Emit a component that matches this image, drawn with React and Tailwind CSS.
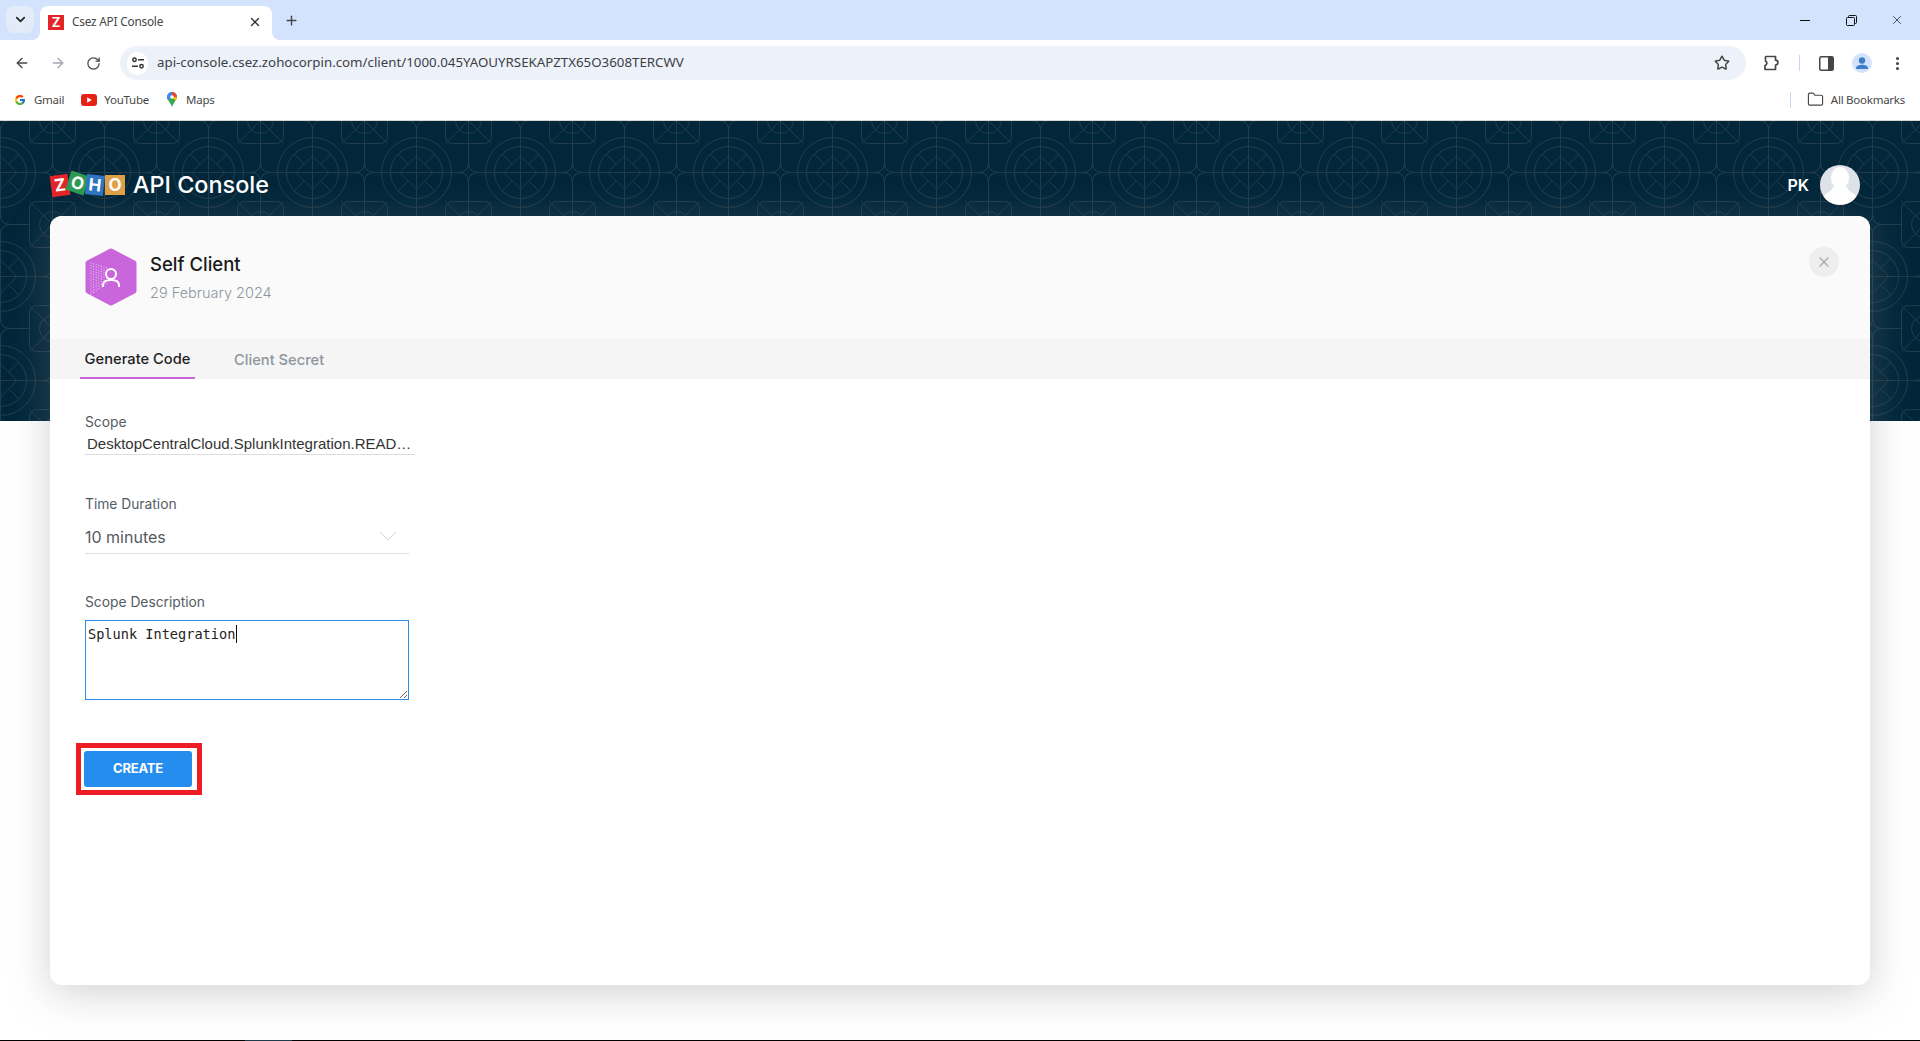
import { ArrowLeft, ArrowRight, ChevronDown, Folder, MoreVertical, Plus, RotateCw, Star, X } from "lucide-react";
import { FcGoogle } from "react-icons/fc";

const uiFont = "font-['Inter',sans-serif]";
const chromeFont = "font-['Noto_Sans',sans-serif]";

function BannerPattern() {
  const squares = [[-52, -52], [52, -52], [-52, 52], [52, 52]];
  const stars = [[-52, 0], [52, 0], [0, -52], [0, 52]];
  return (
    <svg className="absolute inset-0 h-full w-full" xmlns="http://www.w3.org/2000/svg">
      <defs>
        <pattern id="tile" x="52" y="-1" width="104" height="104" patternUnits="userSpaceOnUse">
          <g transform="translate(52.5 52.5)" fill="none" stroke="#223c4b" strokeWidth="1">
            <path d="M-52 -52V52M52 -52V52M0 -52V52M-52 0H52M-52 -52H-29M29 -52H52M-29 52H29M-52 52H-29M29 52H52M-29 -52H29" />
            <circle r="35" />
            <circle r="26" />
            <path d="M-16.5 0L0 -16.5L16.5 0L0 16.5Z" />
            <path d="M-18.4 -18.4L-8.2 -8.2M18.4 -18.4L8.2 -8.2M-18.4 18.4L-8.2 8.2M18.4 18.4L8.2 8.2" />
            {squares.map(([x, y]) => (
              <g key={`${x}${y}`} transform={`translate(${x} ${y})`}>
                <rect x="-23" y="-23" width="46" height="46" rx="7" fill="#02273b" />
                <circle r="13" />
                <path d="M-23 -23L23 23M23 -23L-23 23M0 -23V23" />
              </g>
            ))}
            {stars.map(([x, y]) => (
              <path
                key={`s${x}${y}`}
                transform={`translate(${x} ${y})`}
                d="M-10 0Q0 0 0 -10Q0 0 10 0Q0 0 0 10Q0 0 -10 0Z"
                fill="#02273b"
              />
            ))}
          </g>
        </pattern>
      </defs>
      <rect width="100%" height="100%" fill="url(#tile)" />
    </svg>
  );
}

function ZohoLogo() {
  return (
    <div className={`flex items-center ${uiFont} text-[17px] font-bold leading-none text-white`}>
      <span className="flex h-[21px] w-[18px] -rotate-[8deg] items-center justify-center bg-[#e42527]">Z</span>
      <span className="flex h-[20px] w-[19px] -ml-[1px] -mt-[4px] rotate-[18deg] items-center justify-center bg-[#2d9a53]">O</span>
      <span className="flex h-[20px] w-[18px] -ml-[1px] -mt-[1px] rotate-[6deg] items-center justify-center bg-[#2f75c2]">H</span>
      <span className="flex h-[20px] w-[20px] ml-[1px] items-center justify-center bg-[#df9f47]">O</span>
    </div>
  );
}

function HexBadge() {
  const dots = [];
  for (let c = 0; c < 7; c++) {
    for (let r = 0; r < 13 - c; r++) {
      dots.push([6 + c * 2.6, 15 + c * 0.8 + r * 2.6]);
    }
  }
  return (
    <svg width="52" height="58" viewBox="0 0 52 58">
      <path d="M26 3L49 15V43L26 55L3 43V15Z" fill="#c966dc" stroke="#c966dc" strokeWidth="5" strokeLinejoin="round" />
      {dots.map(([x, y], i) => (
        <circle key={i} cx={x} cy={y} r="0.6" fill="#e6c6ee" />
      ))}
      <circle cx="26" cy="26" r="5" fill="none" stroke="#fff" strokeWidth="2" />
      <path d="M18 39V37C18 33.5 21 32 26 32C31 32 34 33.5 34 37V39" fill="none" stroke="#fff" strokeWidth="2" />
    </svg>
  );
}

function TabStrip() {
  return (
    <div className="flex h-[40px] bg-[#d3e3fd]">
      <div className="ml-[6px] mt-[6px] flex h-[27px] w-[28px] items-center justify-center rounded-lg bg-[#e3ebf8]">
        <ChevronDown size={15} strokeWidth={2.6} color="#1f1f1f" />
      </div>
      <div className="ml-[-2px] flex items-end">
        <div className="h-2 w-2 bg-white">
          <div className="h-2 w-2 rounded-br-lg bg-[#d3e3fd]" />
        </div>
        <div className={`flex h-[34px] w-[232px] items-center rounded-t-lg bg-white pb-[2px] pl-[8px] ${chromeFont}`}>
          <span className={`flex h-[15px] w-[16px] items-center justify-center bg-[#e42527] text-[13px] font-bold leading-none text-white ${uiFont}`}>Z</span>
          <span className="ml-[8px] w-[176px] text-[11.8px] tracking-[-0.2px] text-[#444746]">Csez API Console</span>
          <X size={14} strokeWidth={2.4} color="#333" />
        </div>
        <div className="h-2 w-2 bg-white">
          <div className="h-2 w-2 rounded-bl-lg bg-[#d3e3fd]" />
        </div>
      </div>
      <div className="ml-[3px] mt-[12px] flex h-[16px] w-[16px] items-center justify-center">
        <Plus size={15} strokeWidth={2.2} color="#444" />
      </div>
      <div className="ml-auto flex h-[40px]">
        <div className="flex w-[46px] items-center justify-center">
          <div className="h-[1px] w-[10px] bg-[#111]" />
        </div>
        <div className="flex w-[46px] items-center justify-center">
          <svg width="11" height="11" viewBox="0 0 11 11" fill="none" stroke="#111">
            <rect x="0.5" y="2.5" width="8" height="8" rx="1" />
            <path d="M2.5 2.5V1.5A1 1 0 0 1 3.5 0.5H9.5A1 1 0 0 1 10.5 1.5V7.5A1 1 0 0 1 9.5 8.5H8.5" />
          </svg>
        </div>
        <div className="flex w-[46px] items-center justify-center">
          <X size={14} strokeWidth={1.2} color="#111" />
        </div>
      </div>
    </div>
  );
}

function Toolbar() {
  return (
    <div className="flex h-[40px] items-start rounded-t-lg bg-white">
      <div className="mt-[6px] flex h-[34px] w-[120px] items-center gap-[20px] pl-[14px]">
        <ArrowLeft size={16} strokeWidth={2} color="#474747" />
        <ArrowRight size={16} strokeWidth={2} color="#a3a8b0" />
        <RotateCw size={15} strokeWidth={2} color="#474747" />
      </div>
      <div className="mt-[6px] flex h-[34px] w-[1626px] items-center rounded-full bg-[#edf2fa] pl-[7px] pr-[16px]">
        <div className="flex h-[23px] w-[21px] items-center justify-center rounded-full bg-white">
          <svg width="14" height="12" viewBox="0 0 14 12" fill="none" stroke="#333" strokeWidth="1.5">
            <circle cx="3.5" cy="2.8" r="1.7" />
            <path d="M7 2.8H13M1 9.2H7" />
            <circle cx="10.5" cy="9.2" r="1.7" />
          </svg>
        </div>
        <span className={`ml-[9px] flex-1 text-[13.3px] text-[#3c4043] ${chromeFont}`}>
          api-console.csez.zohocorpin.com/client/1000.045YAOUYRSEKAPZTX65O3608TERCWV
        </span>
        <Star size={16} strokeWidth={2.2} color="#444746" />
      </div>
      <div className="mt-[6px] flex h-[34px] flex-1 items-center pl-[17px]">
        <svg width="18" height="18" viewBox="0 0 18 18" fill="none" stroke="#444746" strokeWidth="1.7" strokeLinejoin="round">
          <path d="M3 2.5H12.5V6.2A2.4 2.4 0 0 1 12.5 11V15.5H2V11.5A2.4 2.4 0 0 0 2.5 7V3Z" />
        </svg>
        <div className="ml-[18px] h-[16px] w-[1px] bg-[#c7d8f2]" />
        <svg className="ml-[19px]" width="15" height="15" viewBox="0 0 15 15">
          <rect x="0.75" y="0.75" width="13.5" height="13.5" rx="1.5" fill="#fff" stroke="#444746" strokeWidth="1.5" />
          <rect x="9" y="1" width="5" height="13" fill="#444746" />
        </svg>
        <div className="ml-[18px] flex h-[20px] w-[20px] items-center justify-center overflow-hidden rounded-full bg-[#d3e3fd]">
          <svg width="20" height="20" viewBox="0 0 20 20" fill="#3f7fc9">
            <circle cx="10" cy="7.5" r="3.2" />
            <path d="M4 16C4 12.5 7 11.8 10 11.8C13 11.8 16 12.5 16 16Z" />
          </svg>
        </div>
        <MoreVertical className="ml-[17px]" size={17} strokeWidth={2.4} color="#444746" />
      </div>
    </div>
  );
}

function BookmarksBar() {
  return (
    <div className={`flex h-[41px] items-center border-b border-[#d5d5d5] bg-white pb-[1px] pl-[14px] pr-[15px] text-[11.5px] tracking-[-0.25px] text-[#474747] ${chromeFont}`}>
      <FcGoogle size={12} />
      <span className="ml-[8px]">Gmail</span>
      <svg className="ml-[17px]" width="16" height="12" viewBox="0 0 16 12">
        <rect width="16" height="12" rx="3" fill="#e62117" />
        <path d="M6.2 3.2L10.8 6L6.2 8.8Z" fill="#fff" />
      </svg>
      <span className="ml-[7px]">YouTube</span>
      <svg className="ml-[17px]" width="12" height="15" viewBox="0 0 10 15">
        <path d="M5 0A5 5 0 0 1 10 5C10 8 7 9.5 5 15C3 9.5 0 8 0 5A5 5 0 0 1 5 0Z" fill="#34a853" />
        <path d="M1.5 1.5A5 5 0 0 1 5 0L5 5L1 8A5 5 0 0 1 1.5 1.5Z" fill="#4285f4" />
        <path d="M5 0A5 5 0 0 1 10 5L5 5Z" fill="#ea4335" />
        <path d="M10 5C10 6.5 9 7.5 8 8.5L5 5Z" fill="#fbbc04" />
        <circle cx="5" cy="5" r="1.8" fill="#fff" />
      </svg>
      <span className="ml-[8px]">Maps</span>
      <div className="ml-auto h-[16px] w-[1px] bg-[#c7d8f2]" />
      <Folder className="ml-[16px]" size={17} strokeWidth={1.6} color="#444746" />
      <span className="ml-[7px]">All Bookmarks</span>
    </div>
  );
}

function Field({ label, children, className }) {
  return (
    <div className={className}>
      <div className="text-[13.8px] leading-[16px] text-[#555b63]">{label}</div>
      {children}
    </div>
  );
}

function ClientCard() {
  return (
    <div className={`mx-[50px] h-[769px] rounded-xl bg-white shadow-[0_8px_40px_rgba(125,125,125,0.35)] ${uiFont}`}>
      <div className="flex h-[123px] items-start rounded-t-xl bg-[#fafafa] pl-[35px] pr-[31px] pt-[32px]">
        <HexBadge />
        <div className="ml-[13px] pt-[4px]">
          <div className="text-[18.5px] font-medium leading-[24px] text-[#1a1a1a]">Self Client</div>
          <div className="mt-[7px] text-[14.5px] font-light leading-[20px] text-[#8f969e]">29 February 2024</div>
        </div>
        <div className="ml-auto mt-[-1px] flex h-[30px] w-[30px] items-center justify-center rounded-full bg-[#eeeeee]">
          <X size={16} strokeWidth={2} color="#a3adb8" />
        </div>
      </div>
      <div className="flex h-[40px] bg-[#f5f5f5] pl-[30px] text-[14.7px] font-medium">
        <div className="flex h-[40px] w-[115px] items-center justify-center border-b-2 border-[#c966dc] pt-[3px] text-[#222]">Generate Code</div>
        <div className="ml-[39px] flex h-[40px] items-center pt-[2px] text-[#8f969e]">Client Secret</div>
      </div>
      <div className="pl-[35px] pt-[35px]">
        <Field label="Scope" className="w-[330px]">
          <div className="truncate border-b border-[#dddddd] pl-[2px] pt-[4px] font-['Liberation_Sans',sans-serif] text-[15px] leading-[20px] text-[#333]">
            DesktopCentralCloud.SplunkIntegration.READ…
          </div>
        </Field>
        <Field label="Time Duration" className="mt-[41px] w-[324px]">
          <div className="flex h-[42px] items-center justify-between border-b border-[#dddddd] pr-[12px] pt-[9px]">
            <span className="text-[16px] text-[#555b63]">10 minutes</span>
            <svg className="mb-[3px]" width="18" height="10" viewBox="0 0 18 10" fill="none" stroke="#d2d5d9" strokeWidth="1">
              <path d="M1 1L9 9L17 1" />
            </svg>
          </div>
        </Field>
        <Field label="Scope Description" className="mt-[40px] w-[324px]">
          <div className="relative mt-[10px] h-[80px]">
            <textarea
              readOnly
              defaultValue="Splunk Integration"
              className="block h-[80px] w-[324px] border border-[#2b8de8] bg-white px-[2px] pb-[2px] pt-[4px] font-['DejaVu_Sans_Mono',monospace] text-[13.6px] leading-[18px] text-[#222] outline-none"
            />
            <div className="absolute left-[151px] top-[5px] h-[18px] w-[1px] bg-[#111]" />
          </div>
        </Field>
        <div className="-ml-[9px] mt-[43px] h-[52px] w-[126px] border-[5px] border-[#ee1c25] p-[3px]">
          <button className="h-[36px] w-[108px] rounded-[3px] bg-[#258ded] text-[13px] font-bold tracking-[-0.2px] text-white">
            CREATE
          </button>
        </div>
      </div>
    </div>
  );
}

export default function App() {
  return (
    <div className="flex h-[1041px] flex-col overflow-hidden bg-white">
      <TabStrip />
      <Toolbar />
      <BookmarksBar />
      <div className="relative flex-1">
        <div className="absolute left-0 right-0 top-0 h-[300px] overflow-hidden bg-[#02273b]">
          <BannerPattern />
        </div>
        <div className="relative">
          <div className={`flex h-[95px] items-center pl-[51px] pr-[60px] pt-[33px] ${uiFont}`}>
            <ZohoLogo />
            <span className="ml-[8px] text-[23.4px] font-medium text-white">API Console</span>
            <span className="ml-auto text-[16px] font-semibold text-white">PK</span>
            <div className="ml-[11px] h-[40px] w-[40px] overflow-hidden rounded-full bg-[#dfe2e7]">
              <svg width="40" height="40" viewBox="0 0 40 40" fill="#fff">
                <ellipse cx="20" cy="13" rx="9" ry="11" />
                <path d="M13 22C12 27 5 28 3 32C8 42 32 42 37 32C35 28 28 27 27 22Z" />
              </svg>
            </div>
          </div>
          <ClientCard />
        </div>
      </div>
      <div className="flex h-[1px] bg-black">
        <div className="ml-[245px] h-[1px] w-[47px] bg-[#1c3a4a]" />
      </div>
    </div>
  );
}
